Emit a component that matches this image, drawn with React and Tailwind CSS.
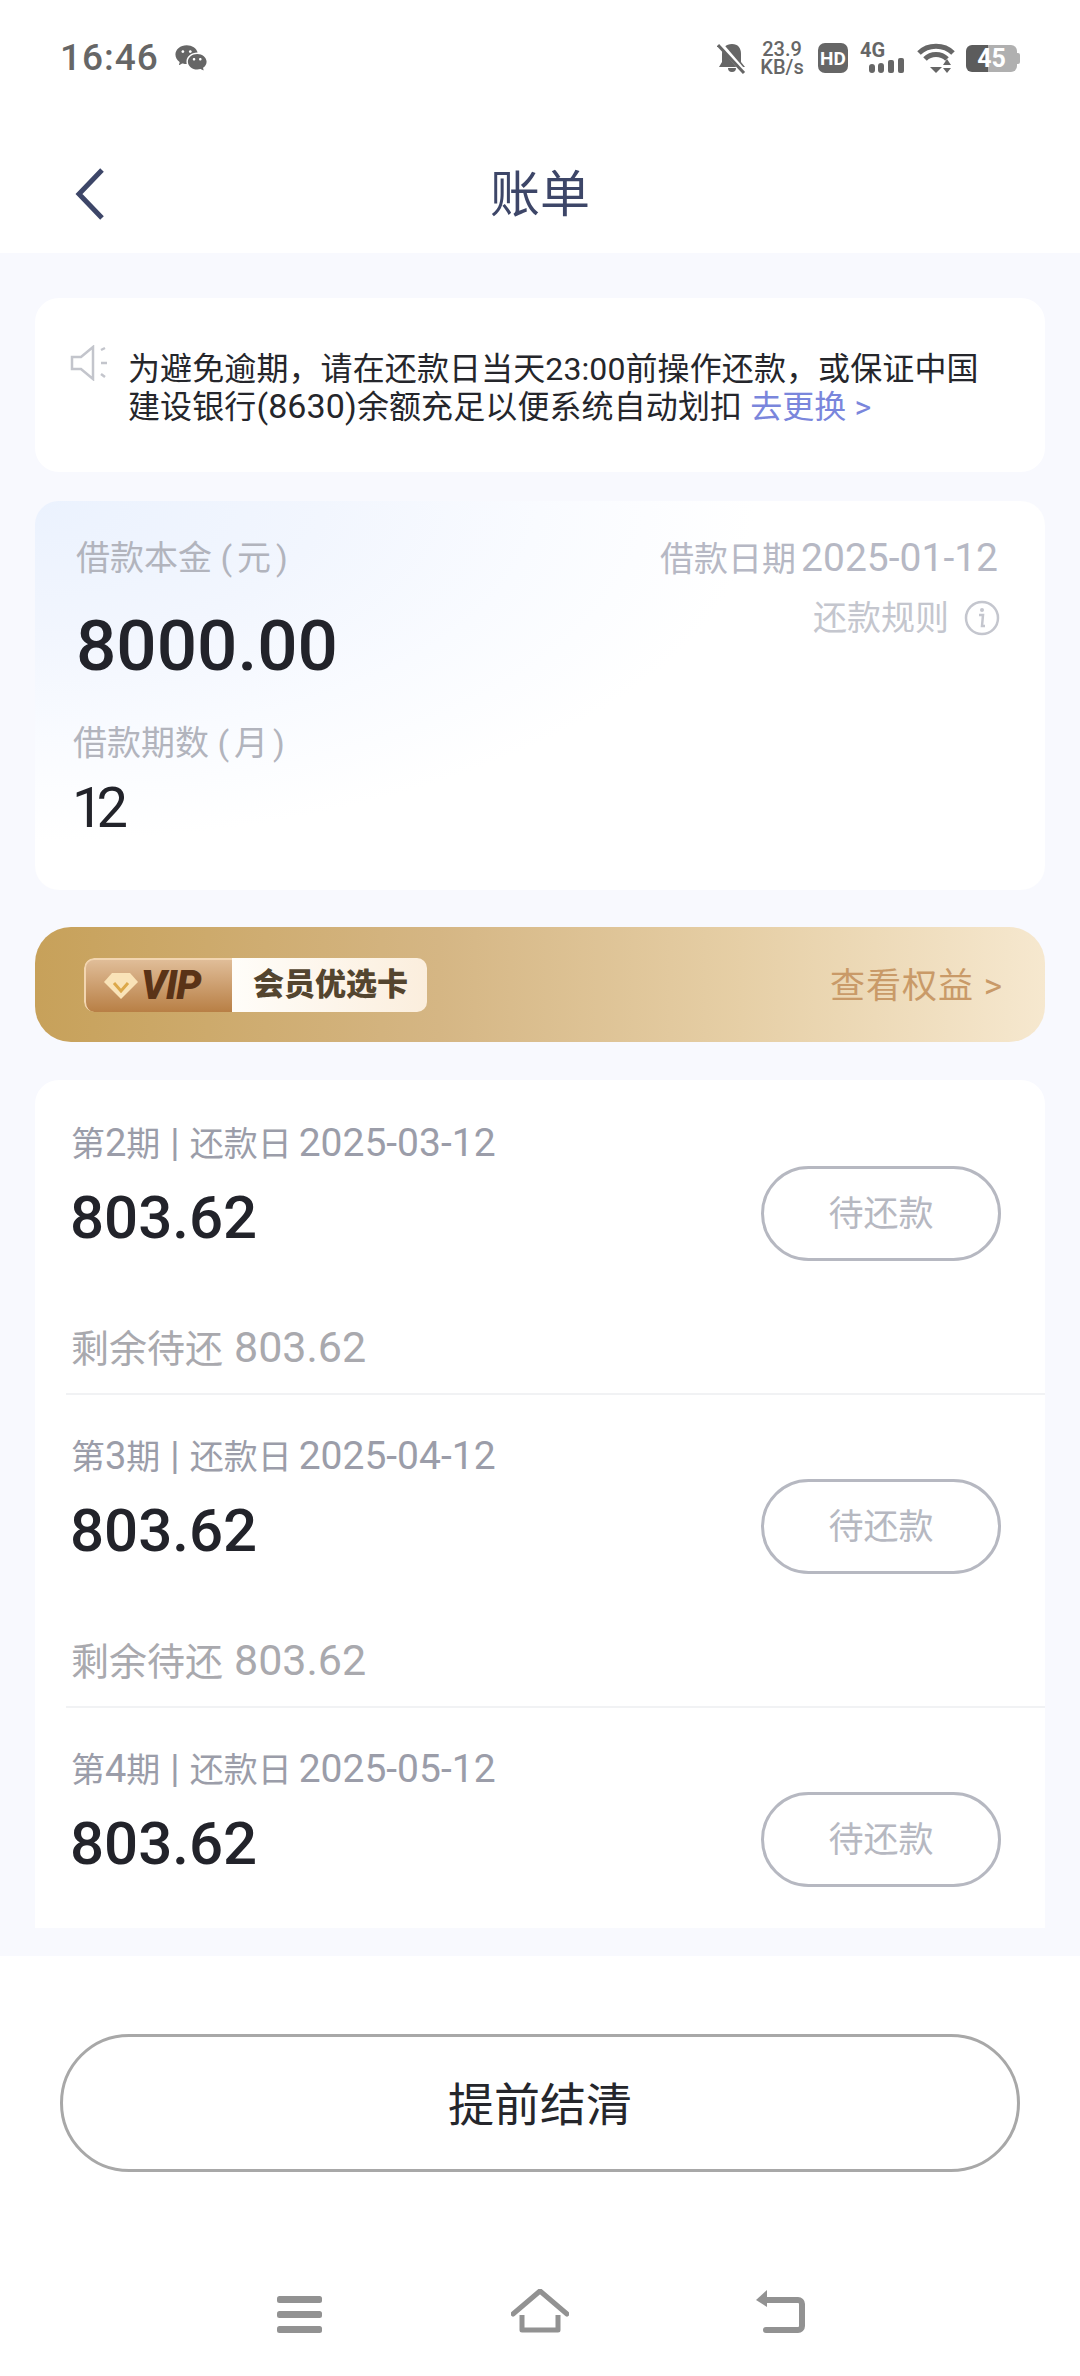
import { RiWechatFill } from 'react-icons/ri';

const FONT = 'font-[Roboto,"Noto_Sans_CJK_SC",sans-serif]';

function StatusBar() {
  return (
    <div className="flex items-center justify-between h-[40px] mt-[38px] pl-[60px] pr-[60px] text-[#666666]">
      <div className="flex items-center">
        <span className="text-[37px] leading-[40px] font-medium tracking-[1px]">16:46</span>
        <RiWechatFill className="ml-[15px] w-[34px] h-[34px]" />
      </div>
      <div className="flex items-center">
        {/* muted bell */}
        <svg width="30" height="32" viewBox="0 0 30 32">
          <path d="M15 2c6 0 9 4 9 10v8l4 5H2l3-5v-8c0-6 4-10 10-10zM11 26h8a4 4 0 0 1-8 0z" fill="#666" />
          <path d="M3 2l24 28" stroke="#fff" strokeWidth="5" />
          <path d="M1 3l26 28" stroke="#666" strokeWidth="3" />
        </svg>
        <div className="ml-[12px] w-[46px] text-center text-[20px] leading-[18px] font-medium">
          23.9
          <br />
          KB/s
        </div>
        <div className="ml-[13px] w-[30px] h-[30px] rounded-[7px] bg-[#666666] flex items-center justify-center text-white text-[19px] font-bold leading-none">HD</div>
        <div className="ml-[12px] w-[44px] h-[30px] flex flex-col">
          <span className="text-[20px] leading-[15px] font-bold">4G</span>
          <svg width="44" height="15" viewBox="0 0 44 15">
            <rect x="9" y="6" width="6" height="9" rx="3" fill="#666" />
            <rect x="18" y="5" width="6" height="10" rx="3" fill="#666" />
            <rect x="28" y="2" width="6" height="13" rx="2" fill="#666" />
            <rect x="38" y="0" width="6" height="15" rx="2" fill="#666" />
          </svg>
        </div>
        {/* wifi */}
        <svg className="ml-[13px]" width="38" height="30" viewBox="0 0 38 30">
          <path d="M2 10C11 1 27 1 36 10" fill="none" stroke="#666" strokeWidth="5" />
          <path d="M8 16C14 10 24 10 30 16" fill="none" stroke="#666" strokeWidth="5" />
          <path d="M13 24h12l-6 6z" fill="#666" />
          <path d="M26 22l4-6 4 6zM26 25h8l-4 5z" fill="#666" />
        </svg>
        <div className="ml-[11px] flex items-center">
          <div className="w-[51px] h-[27px] rounded-[6px] bg-[linear-gradient(90deg,#5c5c5c_44%,#b0b0b0_44%)] flex items-center justify-center text-white text-[25px] font-bold leading-none">45</div>
          <div className="w-[3px] h-[11px] rounded-r-[2px] bg-[#b0b0b0]" />
        </div>
      </div>
    </div>
  );
}

function Header() {
  return (
    <div className="grid grid-cols-[1fr_auto_1fr] items-center h-[70px] mt-[79px]">
      <div className="pl-[74px] flex">
        <svg width="32" height="54" viewBox="0 0 32 54">
          <path d="M28 3L5 27l23 24" fill="none" stroke="#3d4668" strokeWidth="5" />
        </svg>
      </div>
      <span className="pt-[3px] text-[50px] leading-[70px] text-[#3d4668]">账单</span>
      <span />
    </div>
  );
}

function Notice() {
  return (
    <div className="h-[174px] rounded-[24px] bg-white flex items-start pt-[53px] pl-[35px]">
      <svg className="-mt-[6px] shrink-0" width="40" height="36" viewBox="0 0 40 36">
        <path d="M2 12h9L23 2v32L11 24H2z" fill="none" stroke="#c3c5cc" strokeWidth="2.5" />
        <path d="M31 5l4-2M31 18h6M31 29l4 3" fill="none" stroke="#c3c5cc" strokeWidth="2.5" />
      </svg>
      <div className="ml-[18px] w-[880px] text-[32px] leading-[37px] tracking-[0.1px] text-[#25262b]">
        <p className="h-[37px]">为避免逾期，请在还款日当天23:00前操作还款，或保证中国</p>
        <p className="h-[37px]">
          建设银行<span className="text-[34px]">(8630)</span>余额充足以便系统自动划扣 <span className="text-[#7a86dc]">去更换 &gt;</span>
        </p>
      </div>
    </div>
  );
}

function AmountCard() {
  return (
    <div className="mt-[29px] h-[389px] rounded-[24px] flex justify-between pt-[35px] pl-[41px] pr-[47px] bg-[radial-gradient(720px_340px_at_0%_0%,#ebf2fe_0%,#f2f6fe_40%,#f9fbff_70%,#ffffff_100%)] bg-white">
      <div>
        <div className="text-[34px] leading-[44px] text-[#b2b4bd]">借款本金 <span className="tracking-[5px]">(元)</span></div>
        <div className="mt-[26px] text-[71px] leading-[80px] font-medium text-[#22232a]">8000.00</div>
        <div className="mt-[35px] -ml-[3px] text-[34px] leading-[44px] text-[#b2b4bd]">借款期数 <span className="tracking-[5px]">(月)</span></div>
        <div className="mt-[11px] -ml-[4px] text-[56px] leading-[64px] tracking-[-7px] text-[#22232a]">12</div>
      </div>
      <div className="flex flex-col items-end">
        <div className="h-[44px] text-[34px] leading-[44px] text-[#b6b8c4]">借款日期<span className="ml-[5px] text-[39px]">2025-01-12</span></div>
        <div className="mt-[16px] -mr-[2px] flex items-center text-[34px] leading-[44px] text-[#c4c6ce]">
          还款规则
          <svg className="ml-[15px]" width="36" height="36" viewBox="0 0 36 36">
            <circle cx="18" cy="18" r="16" fill="none" stroke="#c4c6ce" strokeWidth="2.5" />
            <circle cx="18" cy="10" r="2" fill="#c4c6ce" />
            <path d="M15 15h4l-1 11h3" fill="none" stroke="#c4c6ce" strokeWidth="2.5" />
          </svg>
        </div>
      </div>
    </div>
  );
}

function VipBar() {
  return (
    <div className="mt-[37px] h-[115px] rounded-[36px] flex items-center justify-between pl-[49px] pr-[42px] bg-[linear-gradient(90deg,#c7a15a_0%,#d5b684_40%,#e6cfa6_70%,#f6e8cf_100%)]">
      <div className="flex h-[54px] w-[343px] rounded-[10px] overflow-hidden">
        <div className="w-[148px] flex items-center pl-[17px] bg-[linear-gradient(180deg,#e0bd98_0%,#b87f45_100%)] border-l-2 border-t-2 border-[#f2d5b0] rounded-l-[10px]">
          <svg width="36" height="28" viewBox="0 0 36 28">
            <path d="M9 1h18l8 9-17 17L1 10z" fill="#f9e3b8" />
            <path d="M11 11l7 8 7-8" fill="none" stroke="#dca84a" strokeWidth="3" />
          </svg>
          <span className="ml-[2px] text-[40px] leading-none font-black italic tracking-[-1px] text-[#5a3317]">VIP</span>
        </div>
        <div className="flex-1 flex items-center pl-[21px] bg-[linear-gradient(90deg,#fffdf9,#fbeedd)] text-[31px] leading-none font-black text-[#54452f]">
          会员优选卡
        </div>
      </div>
      <span className="pt-[4px] text-[35px] leading-[44px] tracking-[1px] text-[#c99a68]">查看权益 &gt;</span>
    </div>
  );
}

function BillItem({ period, date, leftover, last }) {
  return (
    <div className="pt-[41px]">
      <div className="flex items-start justify-between pl-[36px] pr-[44px]">
        <div>
          <div className="h-[40px] text-[34px] leading-[40px] text-[#9b9da9]">
            第<span className="text-[38px]">{period}</span>期<span className="mx-[10px] text-[38px]">|</span>还款日<span className="ml-[7px] text-[39px]">{date}</span>
          </div>
          <div className="-ml-[1px] mt-[20px] h-[70px] text-[60px] leading-[70px] font-medium text-[#22232a]">803.62</div>
        </div>
        <div className="mt-[43px] w-[240px] h-[95px] pt-[3px] rounded-full border-[3px] border-[#b6b8c1] flex items-center justify-center text-[35px] text-[#b6b8c1]">
          待还款
        </div>
      </div>
      {last ? (
        <div className="h-[41px]" />
      ) : (
        <>
          <div className="mt-[64px] mb-[24px] h-[44px] pl-[36px] text-[38px] leading-[44px] text-[#a9a9ae]">
            剩余待还<span className="ml-[11px] text-[43px]">{leftover}</span>
          </div>
          <div className="ml-[31px] h-[2px] bg-[#f1f2f4]" />
        </>
      )}
    </div>
  );
}

export default function App() {
  return (
    <div className={`${FONT} w-[1080px] h-[2376px] bg-white flex flex-col overflow-hidden`}>
      <div className="h-[253px]">
        <StatusBar />
        <Header />
      </div>

      <div className="h-[1703px] bg-[#f8f9fe] px-[35px] pt-[45px]">
        <Notice />
        <AmountCard />
        <VipBar />
        <div className="mt-[38px] pt-[2px] rounded-t-[24px] bg-white">
          <BillItem period={2} date="2025-03-12" leftover="803.62" />
          <BillItem period={3} date="2025-04-12" leftover="803.62" />
          <BillItem period={4} date="2025-05-12" last />
        </div>
      </div>

      <div className="mt-[78px] mx-[60px] h-[138px] pt-[5px] rounded-full border-[3px] border-[#a8a8a8] flex items-center justify-center text-[46px] text-[#25262b]">
        提前结清
      </div>

      {/* system nav */}
      <div className="mt-[116px] flex justify-center items-end h-[45px]">
        <div className="w-[240px] flex justify-center">
          <svg width="46" height="37" viewBox="0 0 46 37">
            <rect x="0" y="0" width="45" height="7" rx="2.5" fill="#929292" />
            <rect x="0" y="15" width="45" height="7" rx="2.5" fill="#929292" />
            <rect x="0" y="30" width="45" height="7" rx="2.5" fill="#929292" />
          </svg>
        </div>
        <div className="w-[240px] flex justify-center">
          <svg width="58" height="44" viewBox="0 0 58 44">
            <path d="M2 25L29 2l27 23" fill="none" stroke="#929292" strokeWidth="5" strokeLinecap="round" strokeLinejoin="round" />
            <path d="M11 26v15h36V26" fill="none" stroke="#929292" strokeWidth="5" strokeLinejoin="round" />
          </svg>
        </div>
        <div className="w-[240px] flex justify-center">
          <svg width="50" height="43" viewBox="0 0 50 43">
            <path d="M12 0v17L1 10z" fill="#929292" />
            <path d="M8 10h35a4 4 0 0 1 4 4v22a4 4 0 0 1-4 4H11" fill="none" stroke="#929292" strokeWidth="6" strokeLinecap="round" />
          </svg>
        </div>
      </div>
    </div>
  );
}
